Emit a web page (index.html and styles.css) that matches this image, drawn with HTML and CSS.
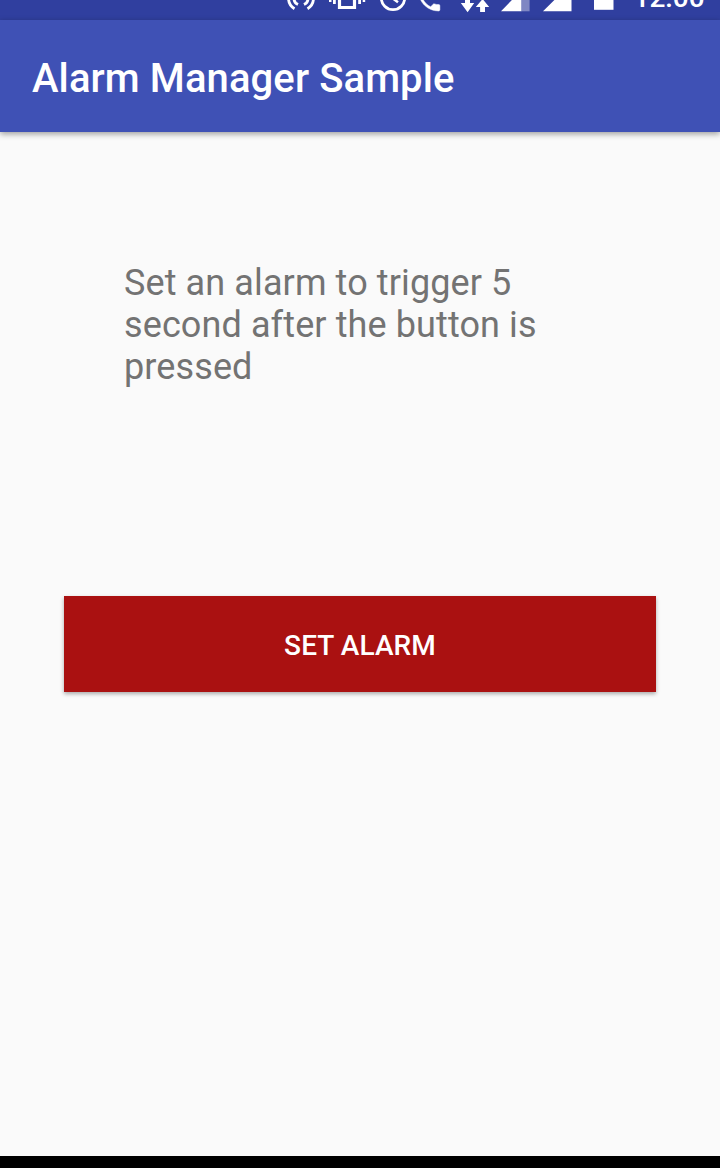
FILE: index.html
```
<!DOCTYPE html>
<html lang="en">
<head>
<meta charset="utf-8">
<title>Alarm Manager Sample</title>
<link rel="stylesheet" href="styles.css">
</head>
<body>
<div class="screen">
  <div class="status-bar">
    <svg class="status-icons" viewBox="0 0 630 20" width="630" height="20" fill="#fff">
      <g fill="none" stroke="#fff" stroke-width="2.8">
        <path d="M288.6 -3A12.4 12.4 0 0 0 294.500 8.700M313.400 -3A12.400 12.400 0 0 1 307.500 8.700"/>
        <path d="M294.200 -3A7 7 0 0 0 298 4.600M307.800 -3A7 7 0 0 1 304 4.600"/>
        <path d="M339.500 -12V7.500H354.500V-12" stroke-width="3.200"/>
        <circle cx="393" cy="-2" r="11.700"/>
        <path d="M392 -8V-2.200L398 2.300" stroke-width="2.500"/>
      </g>
      <path d="M333 -6h2.800V4H333zM358.200 -6h2.800V4h-2.800zM329 -4h2.500V2H329zM362.700 -4h2.500V2h-2.500z"/>
      <path transform="translate(415 -13.500) scale(1.185 1.167)" d="M6.620 10.790c1.440 2.830 3.760 5.140 6.590 6.590l2.200-2.200c.27-.27.67-.36 1.020-.24 1.120.37 2.330.57 3.570.57.55 0 1 .45 1 1V20c0 .55-.45 1-1 1C10.610 21 3 13.390 3 4c0-.55.45-1 1-1h3.500z" stroke="#fff" stroke-width=".4"/>
      <path d="M465 -8h5V3h4.200L467.600 12.300L460.800 3h4.200zM482.600 -1L489.200 7h-4.200v4.900h-4.900V7H475.800z"/>
      <path d="M521.600 -10V11.300H501zM571.500 -17V11.300H543z"/>
      <path d="M521.600 -10h8V11.300h-8z" fill="#7f87c3"/>
      <path d="M594 -18h19.500V9.800H594z"/>
    </svg>
    <span class="clock">12:00</span>
  </div>
  <header class="app-bar">
    <h1 class="title">Alarm Manager Sample</h1>
  </header>
  <main class="content">
    <p class="message">Set an alarm to trigger 5 second after the button is pressed</p>
    <button class="alarm-button" type="button">SET ALARM</button>
  </main>
  <div class="nav-bar"></div>
</div>
</body>
</html>
```
FILE: styles.css
```
body {
  margin: 0;
  font-family: Roboto, "Liberation Sans", sans-serif;
}

.screen {
  display: flex;
  flex-direction: column;
  width: 720px;
  height: 1168px;
  overflow: hidden;
  background: #fafafa;
}

.status-bar {
  display: flex;
  flex: none;
  height: 20px;
  overflow: hidden;
  background: #303f9f;
  color: #fff;
}

.status-icons {
  flex: none;
}

.clock {
  margin: -18px 0 0 3.5px;
  font-size: 28px;
  font-weight: 500;
  line-height: 32px;
}

.app-bar {
  display: flex;
  flex: none;
  align-items: center;
  height: 112px;
  padding: 0 32px;
  box-sizing: border-box;
  background: #3f51b5;
  box-shadow: 0 2px 6px rgba(0, 0, 0, 0.38);
}

.title {
  margin: 6px 0 0;
  color: #fff;
  font-size: 40px;
  font-weight: 500;
  line-height: 48px;
  letter-spacing: 0.1px;
  white-space: nowrap;
}

.content {
  display: flex;
  flex: 1;
  flex-direction: column;
  padding: 130px 64px 0;
}

.message {
  width: 440px;
  height: 126px;
  margin: 0 0 208px 60px;
  color: #737373;
  font-size: 36px;
  line-height: 42px;
  letter-spacing: 0.11px;
}

.alarm-button {
  height: 96px;
  padding: 2px 0 0;
  border: 0;
  background: #aa1111;
  box-shadow: 0 2px 4px rgba(0, 0, 0, 0.32);
  color: #fff;
  font-family: inherit;
  font-size: 28px;
  font-weight: 500;
  letter-spacing: 0.08px;
}

.nav-bar {
  flex: none;
  height: 12px;
  background: #000;
}
```
